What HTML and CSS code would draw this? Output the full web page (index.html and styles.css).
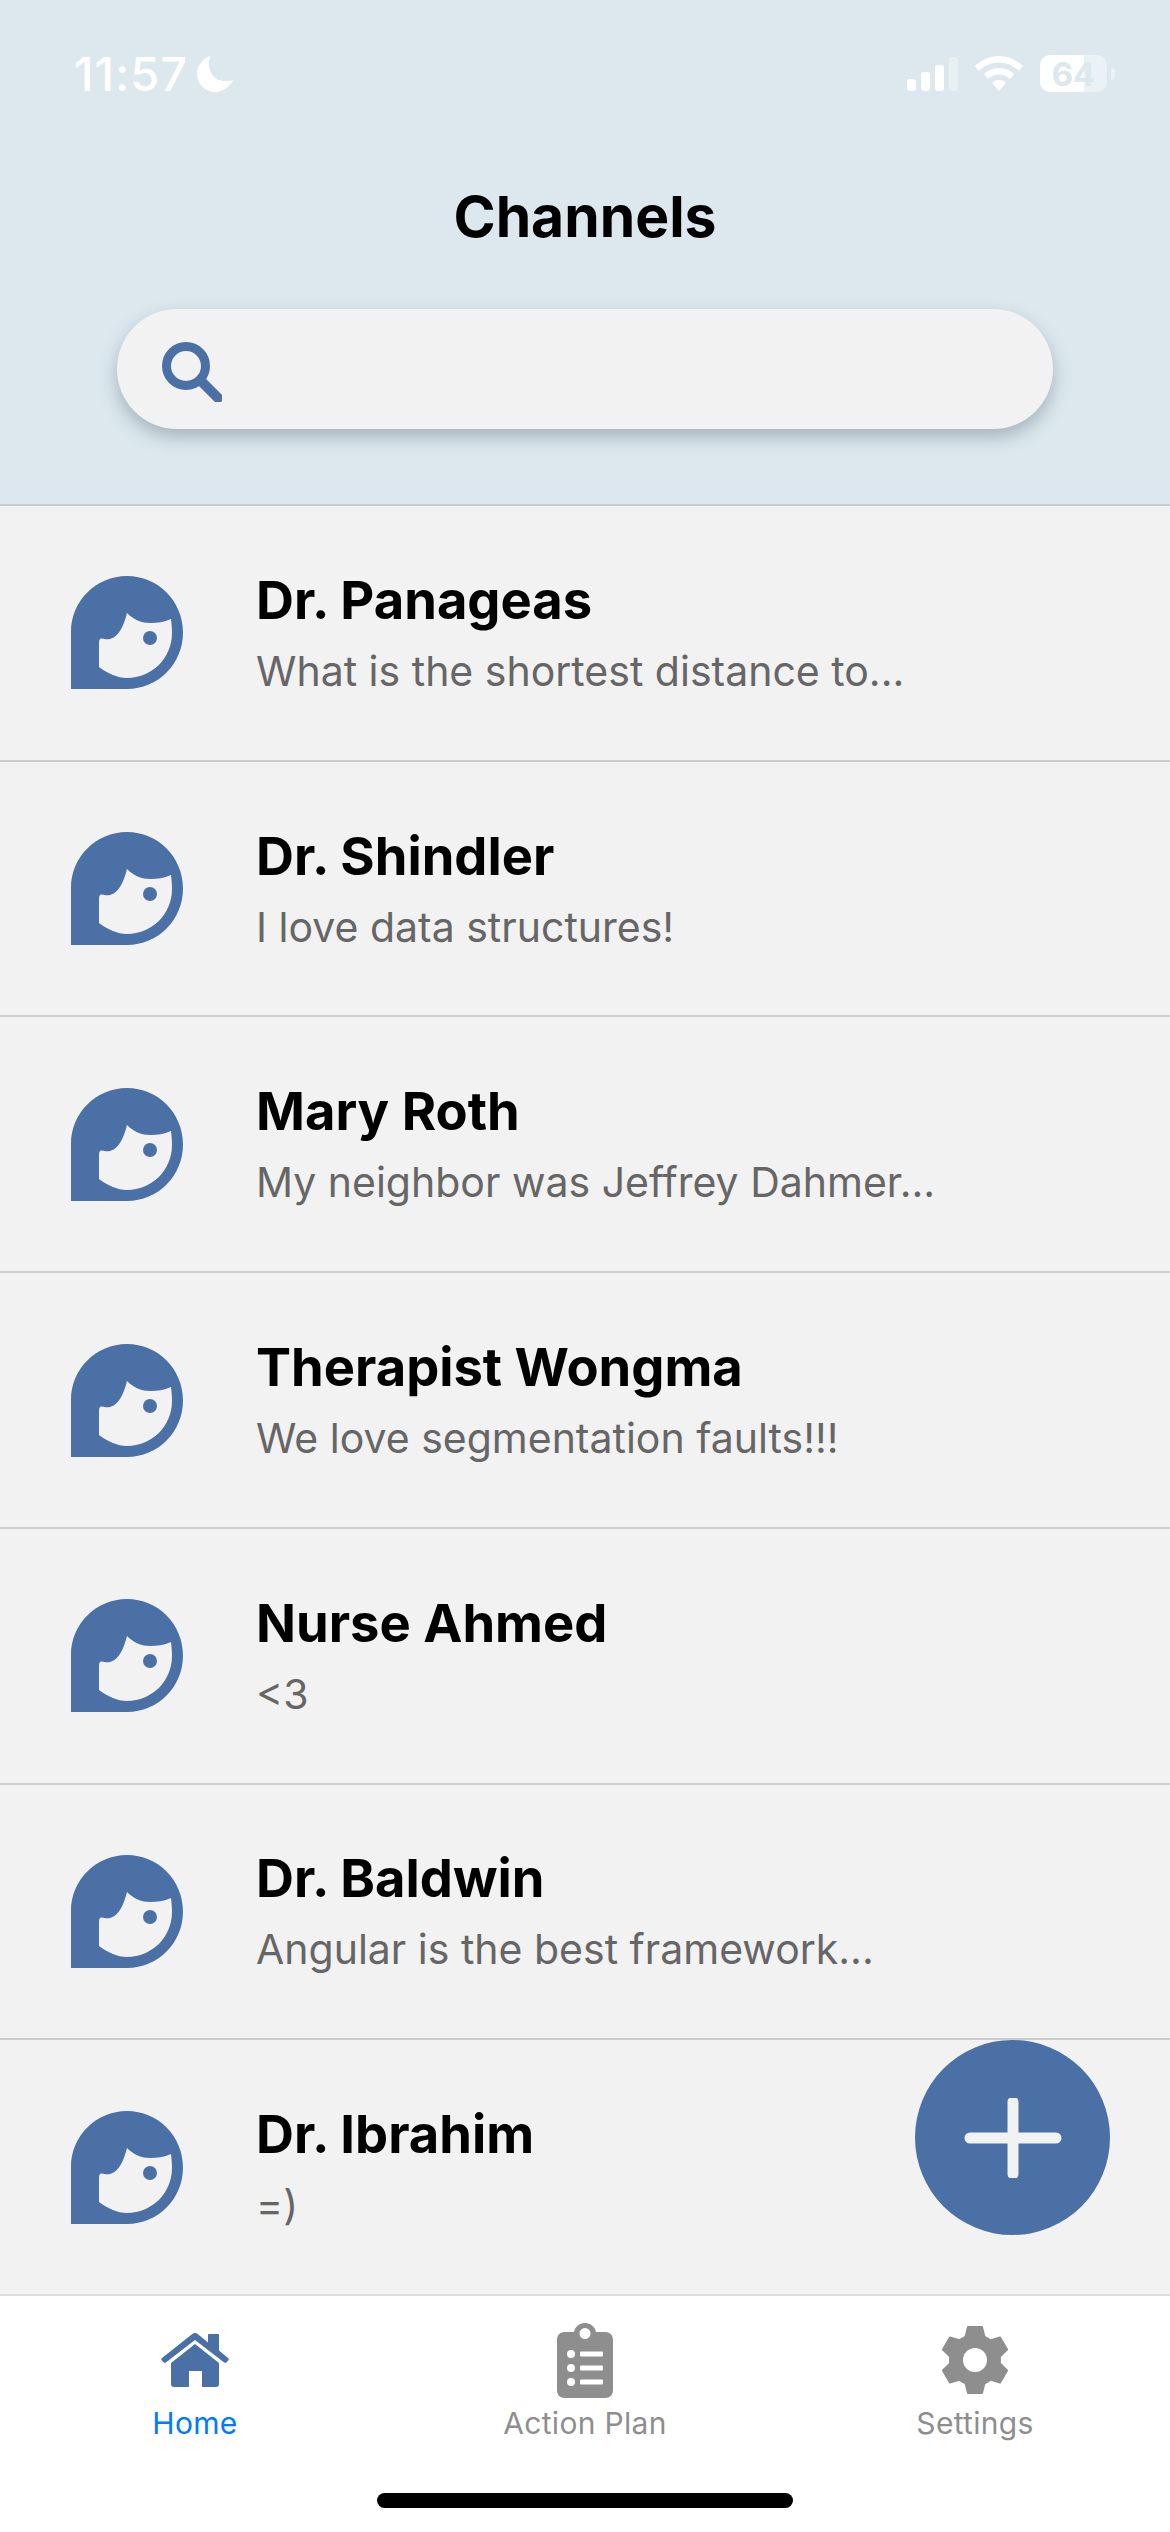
FILE: index.html
```html
<!DOCTYPE html>
<html lang="en">
<head>
  <meta charset="UTF-8">
  <meta name="viewport" content="width=device-width, initial-scale=1.0">
  <title>Channels</title>
  <link rel="stylesheet" href="styles.css">
</head>
<body>

  <header class="top">
    <div class="status">
      <div class="status-left">
        <span class="time">11:57</span>
        <svg class="moon" viewBox="0 0 36 36"><path d="M13 0C5 3 0 10 0 18c0 10 8 18 18 18 8 0 15-5 18-12-2 1-5 1-8 1C17 25 9 15 13 0Z"/></svg>
      </div>
      <div class="status-right">
        <svg class="signal" viewBox="0 0 51 34">
          <rect x="0" y="22" width="9" height="12" rx="3"/>
          <rect x="14" y="15" width="9" height="19" rx="3"/>
          <rect x="28" y="8" width="9" height="26" rx="3"/>
          <rect x="42" y="0" width="9" height="34" rx="3" opacity=".35"/>
        </svg>
        <svg class="wifi" viewBox="0 0 48 35">
          <path d="M24 0c9 0 18 4 24 10l-4 5C39 10 32 6.500 24 6.500S9 10 4 15l-4-5C6 4 15 0 24 0Z"/>
          <path d="M24 12c6 0 11 2 15 6l-4 5c-3-3-7-4.500-11-4.500S16 20 13 23l-4-5c4-4 9-6 15-6Z"/>
          <path d="M24 24c3 0 5 1 7 3l-7 8-7-8c2-2 4-3 7-3Z"/>
        </svg>
        <div class="battery">
          <div class="battery-body"><span class="battery-level">64</span></div>
          <div class="battery-cap"></div>
        </div>
      </div>
    </div>
    <h1>Channels</h1>
    <div class="search">
      <svg class="search-icon" viewBox="0 0 60 60"><circle cx="24" cy="24" r="19.500" fill="none" stroke="#4a70a6" stroke-width="9"/><path d="M40 40 56 56" stroke="#4a70a6" stroke-width="10" stroke-linecap="round" fill="none"/></svg>
    </div>
  </header>

  <ul class="channels">
    <li class="channel">
      <svg class="avatar" viewBox="0 0 112 113"><use href="#face"/></svg>
      <div><div class="name">Dr. Panageas</div><div class="preview">What is the shortest distance to...</div></div>
    </li>
    <li class="channel">
      <svg class="avatar" viewBox="0 0 112 113"><use href="#face"/></svg>
      <div><div class="name">Dr. Shindler</div><div class="preview">I love data structures!</div></div>
    </li>
    <li class="channel">
      <svg class="avatar" viewBox="0 0 112 113"><use href="#face"/></svg>
      <div><div class="name">Mary Roth</div><div class="preview">My neighbor was Jeffrey Dahmer...</div></div>
    </li>
    <li class="channel">
      <svg class="avatar" viewBox="0 0 112 113"><use href="#face"/></svg>
      <div><div class="name">Therapist Wongma</div><div class="preview">We love segmentation faults!!!</div></div>
    </li>
    <li class="channel">
      <svg class="avatar" viewBox="0 0 112 113"><use href="#face"/></svg>
      <div><div class="name">Nurse Ahmed</div><div class="preview">&lt;3</div></div>
    </li>
    <li class="channel">
      <svg class="avatar" viewBox="0 0 112 113"><use href="#face"/></svg>
      <div><div class="name">Dr. Baldwin</div><div class="preview">Angular is the best framework...</div></div>
    </li>
    <li class="channel">
      <svg class="avatar" viewBox="0 0 112 113"><use href="#face"/></svg>
      <div><div class="name">Dr. Ibrahim</div><div class="preview">=)</div></div>
    </li>
  </ul>

  <button class="fab" aria-label="New channel">
    <svg viewBox="0 0 98 80" class="fab-plus"><path d="M49 4V76M6 40H92" stroke="#f2f2f2" stroke-width="11" stroke-linecap="round" fill="none"/></svg>
  </button>

  <nav class="tabs">
    <div class="tab tab-active">
      <div class="tab-icon">
        <svg class="icon-home" viewBox="0 0 68 54">
          <path d="M34 0c1 0 2 .5 3 1.200L47 9.500V2c0-.8.500-1 1-1h9c.5 0 1 .3 1 1v15.500l9 7.500c1 1 1 1.500.3 2.300l-1.800 2c-.8.800-1.500.8-2.300.2L34 7 4.800 29.500c-.8.600-1.500.6-2.300-.2l-1.800-2c-.7-.8-.7-1.300.3-2.300L31 1.200C32 .5 33 0 34 0Z"/>
          <path d="M34 11 58 30v21c0 2-1 3-3 3H41V38H28v16H13c-2 0-3-1-3-3V30Z"/>
        </svg>
      </div>
      <span>Home</span>
    </div>
    <div class="tab">
      <div class="tab-icon">
        <svg class="icon-plan" viewBox="0 0 56 75" fill-rule="evenodd">
          <path d="M8 9h9C18 4 22 0 28 0s10 4 11 9h9c5 0 8 3 8 8v50c0 5-3 8-8 8H8c-5 0-8-3-8-8V17c0-5 3-8 8-8ZM28 5a5.500 5.500 0 1 0 0 11 5.500 5.500 0 0 0 0-11Z"/>
          <g fill="#fff">
            <circle cx="14" cy="31" r="4"/><circle cx="14" cy="45" r="4"/><circle cx="14" cy="59" r="4"/>
            <rect x="23" y="28.500" width="23" height="5" rx="1"/><rect x="23" y="42.500" width="23" height="5" rx="1"/><rect x="23" y="56.500" width="23" height="5" rx="1"/>
          </g>
        </svg>
      </div>
      <span>Action Plan</span>
    </div>
    <div class="tab">
      <div class="tab-icon">
        <svg class="icon-gear" viewBox="-33 -34 66 68">
          <g stroke="#8e8e8f" stroke-width="2" stroke-linejoin="round">
            <circle r="25"/>
            <path d="M-7-33H7L10-21H-10Z"/>
            <path transform="rotate(60)" d="M-7-33H7L10-21H-10Z"/>
            <path transform="rotate(120)" d="M-7-33H7L10-21H-10Z"/>
            <path transform="rotate(180)" d="M-7-33H7L10-21H-10Z"/>
            <path transform="rotate(240)" d="M-7-33H7L10-21H-10Z"/>
            <path transform="rotate(300)" d="M-7-33H7L10-21H-10Z"/>
          </g>
          <circle r="12" fill="#fff"/>
        </svg>
      </div>
      <span>Settings</span>
    </div>
    <div class="home-bar"></div>
  </nav>

  <svg class="defs" width="0" height="0">
    <symbol id="face" viewBox="0 0 112 113">
      <path fill-rule="evenodd" d="M0 113V56C0 25 25 0 56 0s56 25 56 56.500S87 113 56 113ZM28 91c8 6 18 11 28 11 25 0 45-20 45-45 0-5-.5-10-1-14-7 3-14 4-21 4-8 0-16-3-23-10-3 12-8 24-17 26-3 .5-6 0-8-.5-2-.5-3 1-3 4.500ZM72 62a7 7 0 1 0 14 0 7 7 0 0 0-14 0Z"/>
    </symbol>
  </svg>

</body>
</html>
```

FILE: styles.css
```css
* {
  box-sizing: border-box;
}
html, body {
  margin: 0;
  padding: 0;
}
body {
  position: relative;
  width: 1170px;
  height: 2532px;
  display: flex;
  flex-direction: column;
  overflow: hidden;
  font-family: Inter, "Liberation Sans", sans-serif;
  background-color: #f2f2f2;
}
.top {
  height: 506px;
  flex: none;
  background-color: #dce8ee;
  border-bottom: 2px solid #cbcccd;
  padding-top: 55px;
}
.status {
  height: 37px;
  display: flex;
  justify-content: space-between;
  align-items: center;
  padding: 0 55px 0 74px;
}
.status-left, .status-right {
  display: flex;
  align-items: center;
}
.time {
  color: #fff;
  font-size: 47px;
  font-weight: 500;
  line-height: 37px;
  letter-spacing: 1px;
}
.moon {
  width: 36px;
  height: 36px;
  margin-left: 9px;
  fill: #fff;
}
.signal {
  width: 51px;
  height: 34px;
  fill: #fff;
  margin-top: 1px;
}
.wifi {
  width: 48px;
  height: 35px;
  fill: #fff;
  margin-left: 17px;
}
.battery {
  display: flex;
  align-items: center;
  margin-left: 17px;
}
.battery-body {
  width: 67px;
  height: 37px;
  border-radius: 10px;
  display: flex;
  align-items: center;
  justify-content: center;
  background: linear-gradient(to right, #fff 65%, #eaf2f5 65%);
}
.battery-level {
  color: #dce8ee;
  font-size: 33px;
  font-weight: 700;
}
.battery-cap {
  width: 4px;
  height: 12px;
  margin-left: 4px;
  border-radius: 0 6px 6px 0;
  background-color: #eaf2f5;
}
h1 {
  margin: 88px 0 0;
  height: 74px;
  text-align: center;
  color: #000;
  font-size: 57px;
  line-height: 74px;
  font-weight: 700;
}
.search {
  width: 936px;
  height: 120px;
  margin: 55px 0 0 117px;
  padding-left: 45px;
  display: flex;
  align-items: center;
  border-radius: 60px;
  background-color: #f2f2f2;
  box-shadow: 0 8px 18px rgba(60, 80, 95, 0.35);
}
.search-icon {
  width: 60px;
  height: 60px;
  margin-top: 5px;
}
.channels {
  list-style: none;
  margin: 0;
  padding: 0;
  height: 1790px;
  flex: none;
  display: flex;
  flex-direction: column;
}
.channel {
  flex: 1;
  display: flex;
  align-items: center;
  padding-left: 71px;
  border-bottom: 2px solid #cbcccd;
}
.channel:last-child {
  border-bottom-color: #dcdcdc;
}
.avatar {
  width: 112px;
  height: 113px;
  flex: none;
  margin-right: 73px;
  fill: #4a70a6;
}
.name {
  color: #000;
  font-size: 52.5px;
  line-height: 64px;
  font-weight: 700;
}
.preview {
  margin-top: 12px;
  color: #666;
  font-size: 41px;
  line-height: 54px;
}
.fab {
  position: absolute;
  left: 915px;
  top: 2040px;
  width: 195px;
  height: 195px;
  border: none;
  padding: 0;
  border-radius: 50%;
  background-color: #4a70a6;
  display: flex;
  align-items: center;
  justify-content: center;
}
.fab-plus {
  width: 98px;
  height: 80px;
}
.tabs {
  position: relative;
  flex: 1;
  background-color: #fff;
  display: grid;
  grid-template-columns: 1fr 1fr 1fr;
  align-items: start;
}
.tab {
  display: flex;
  flex-direction: column;
  align-items: center;
  color: #8e8e8f;
  font-size: 30px;
  line-height: 38px;
  letter-spacing: 0.3px;
}
.tab-active {
  color: #007aff;
}
.tab-icon {
  height: 82px;
  margin-top: 23px;
  margin-bottom: 3px;
  display: flex;
  align-items: center;
  justify-content: center;
}
.icon-home {
  width: 68px;
  height: 54px;
  fill: #4a70a6;
}
.icon-plan {
  width: 56px;
  height: 75px;
  fill: #8e8e8f;
}
.icon-gear {
  width: 66px;
  height: 68px;
  fill: #8e8e8f;
}
.home-bar {
  position: absolute;
  left: 377px;
  bottom: 24px;
  width: 416px;
  height: 15px;
  border-radius: 8px;
  background-color: #000;
}
.defs {
  position: absolute;
}
```
